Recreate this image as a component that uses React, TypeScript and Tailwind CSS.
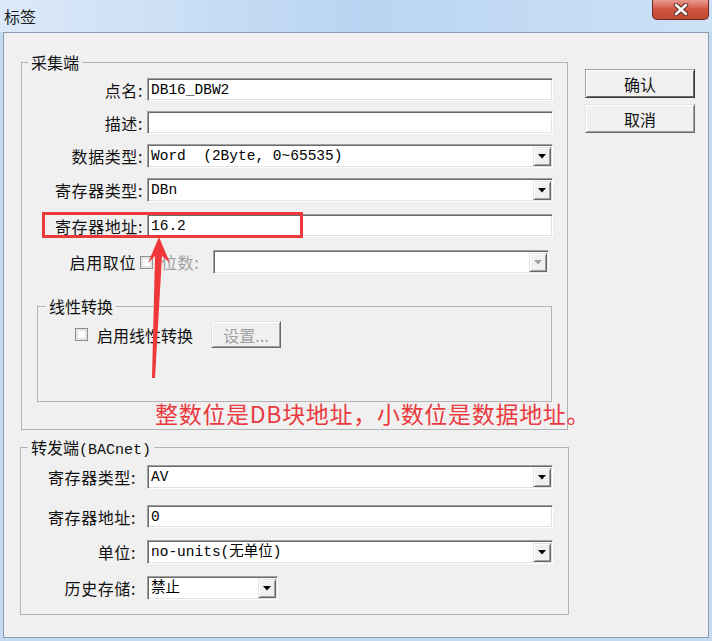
import React from 'react';

const cjk = "font-['Noto_Sans_CJK_SC',sans-serif]";
const mono = "font-['Liberation_Mono','Noto_Sans_CJK_SC',monospace]";

const sunken =
  'bg-white border border-t-[#a0a0a0] border-l-[#a0a0a0] border-b-white border-r-white shadow-[inset_1px_1px_0_#696969,inset_-1px_-1px_0_#e3e3e3]';
const raised =
  'bg-[#f0f0f0] border border-t-[#e3e3e3] border-l-[#e3e3e3] border-b-[#696969] border-r-[#696969] shadow-[inset_1px_1px_0_#ffffff,inset_-1px_-1px_0_#a0a0a0]';

const DropArrow: React.FC<{ disabled?: boolean }> = ({ disabled }) => (
  <div className={`${raised} w-[18px] h-[19px] mr-[1px] flex items-center justify-center shrink-0`}>
    <svg width="8" height="5" viewBox="0 0 8 5">
      <path d="M0 0 H8 L4 4.5 Z" fill={disabled ? '#a0a0a0' : '#000'} />
    </svg>
  </div>
);

const TextBox: React.FC<{ value?: string; width?: string; height?: string }> = ({
  value = '',
  width = 'w-[406px]',
  height = 'h-[23px]',
}) => (
  <div className={`${sunken} ${width} ${height} flex items-center pl-[3px] ${mono} text-[14.5px] leading-[18px] text-black`}>
    {value}
  </div>
);

const Combo: React.FC<{ value?: string; width?: string; disabled?: boolean }> = ({
  value = '',
  width = 'w-[406px]',
  disabled,
}) => (
  <div className={`${sunken} ${width} h-[24px] flex items-center justify-between pl-[3px]`}>
    <span className={`${mono} text-[14.5px] leading-[18px] text-black whitespace-pre`}>{value}</span>
    <DropArrow disabled={disabled} />
  </div>
);

const CheckBox: React.FC = () => (
  <div className="w-[13px] h-[13px] border border-[#8e8f8f] bg-white shadow-[inset_0_0_0_2px_#e4e4e4] shrink-0" />
);

const Row: React.FC<{ label: string; labelW: string; gap: string; mt: string; children: React.ReactNode }> = ({
  label,
  labelW,
  gap,
  mt,
  children,
}) => (
  <div className={`flex items-center ${mt}`}>
    <div className={`${labelW} ${gap} text-right text-[16px] leading-[20px] tracking-[0.6px] text-[#111] whitespace-nowrap`}>
      {label}
    </div>
    {children}
  </div>
);

export default function App() {
  return (
    <div className={`relative w-[712px] h-[641px] bg-[#c4daf1] flex flex-col overflow-hidden ${cjk}`}>
      {/* title bar */}
      <div className="h-[32px] flex justify-between items-start bg-linear-to-r from-[#dce9f8] via-[#b9d4f2] to-[#cde1f6]">
        <span className="self-center pl-[4px] text-[16px] text-[#1a1a1a]">标签</span>
        <div className="mr-[3px] w-[57px] h-[20px] rounded-b-[5px] border border-t-0 border-[#6b2a22] bg-linear-to-b from-[#e99a8f] via-[#d2533f] to-[#c44a33] flex items-center justify-center">
          <svg width="16" height="13" viewBox="0 0 16 13">
            <path d="M3 2 L13 11 M13 2 L3 11" stroke="#5b2a24" strokeWidth="4.5" strokeLinecap="round" />
            <path d="M3 2 L13 11 M13 2 L3 11" stroke="#ffffff" strokeWidth="2.6" strokeLinecap="round" />
          </svg>
        </div>
      </div>

      {/* client area */}
      <div className="flex-1 mx-[3px] mb-[3px] border border-[#8d9db1] bg-[#f0f0f0] flex">
        <div className="ml-[17px] pt-[19px] flex flex-col">
          <fieldset className="w-[547px] h-[378px] border border-[#b4b4b4]">
            <legend className="ml-[6px] px-[3px] h-[20px] leading-[20px] text-[16px] text-[#111]">采集端</legend>
            <div className="pt-[6px] flex flex-col">
              <Row label="点名:" labelW="w-[121px]" gap="mr-[4px]" mt="">
                <TextBox value="DB16_DBW2" />
              </Row>
              <Row label="描述:" labelW="w-[121px]" gap="mr-[4px]" mt="mt-[10px]">
                <TextBox />
              </Row>
              <Row label="数据类型:" labelW="w-[121px]" gap="mr-[4px]" mt="mt-[10px]">
                <Combo value="Word  (2Byte, 0~65535)" />
              </Row>
              <Row label="寄存器类型:" labelW="w-[121px]" gap="mr-[4px]" mt="mt-[10px]">
                <Combo value="DBn" />
              </Row>
              <Row label="寄存器地址:" labelW="w-[121px]" gap="mr-[4px]" mt="mt-[12px]">
                <TextBox value="16.2" />
              </Row>
              <div className="flex items-center mt-[13px]">
                <div className="w-[114px] text-right text-[16px] leading-[20px] tracking-[0.6px] text-[#111]">启用取位</div>
                <div className="ml-[4px]">
                  <CheckBox />
                </div>
                <div className="ml-[8px] w-[52px] text-[16px] leading-[20px] tracking-[0.6px] text-[#a0a0a0]">位数:</div>
                <Combo width="w-[336px]" disabled />
              </div>

              <fieldset className="ml-[15px] mt-[22px] w-[515px] h-[106px] border border-[#b4b4b4]">
                <legend className="ml-[8px] px-[3px] h-[20px] leading-[20px] text-[16px] text-[#111]">线性转换</legend>
                <div className="mt-[5px] h-[27px] flex items-center pl-[37px]">
                  <CheckBox />
                  <span className="ml-[9px] w-[114px] text-[16px] leading-[20px] text-[#111]">启用线性转换</span>
                  <div className={`${raised} w-[70px] h-[27px] flex items-center justify-center text-[16px] leading-[20px] text-[#a0a0a0]`}>
                    设置...
                  </div>
                </div>
              </fieldset>
            </div>
          </fieldset>

          <fieldset className="-ml-[1px] mt-[7px] w-[549px] h-[178px] border border-[#b4b4b4]">
            <legend className="ml-[7px] px-[3px] h-[20px] leading-[20px] text-[16px] text-[#111] whitespace-nowrap">
              转发端<span className={`${mono} text-[15px] leading-[20px]`}>(BACnet)</span>
            </legend>
            <div className="pt-[8px] flex flex-col">
              <Row label="寄存器类型:" labelW="w-[115px]" gap="mr-[11px]" mt="">
                <Combo value="AV" />
              </Row>
              <Row label="寄存器地址:" labelW="w-[115px]" gap="mr-[11px]" mt="mt-[16px]">
                <TextBox value="0" />
              </Row>
              <Row label="单位:" labelW="w-[115px]" gap="mr-[11px]" mt="mt-[12px]">
                <Combo value="no-units(无单位)" />
              </Row>
              <Row label="历史存储:" labelW="w-[115px]" gap="mr-[11px]" mt="mt-[12px]">
                <Combo value="禁止" width="w-[131px]" />
              </Row>
            </div>
          </fieldset>
        </div>

        <div className="ml-[16px] pt-[36px] flex flex-col">
          <div className="w-[110px] h-[29px] bg-[#f0f0f0] border border-t-[#a0a0a0] border-l-[#a0a0a0] border-b-[#3c3c3c] border-r-[#3c3c3c] shadow-[inset_1px_1px_0_#ffffff,inset_-1px_-1px_0_#696969] flex items-center justify-center text-[16px] text-[#111]">
            确认
          </div>
          <div className={`${raised} mt-[6px] w-[110px] h-[29px] flex items-center justify-center text-[16px] text-[#111]`}>
            取消
          </div>
        </div>
      </div>

      {/* annotations */}
      <div className="absolute left-[42px] top-[212px] w-[261px] h-[26px] border-[3px] border-[#ea3a3a]" />
      <svg className="absolute left-[140px] top-[230px]" width="40" height="155" viewBox="0 0 40 155">
        <polygon points="19,7 30,33 22,26 15,148 12,148 15,26 8,33" fill="#f0373a" />
      </svg>
      <div className="absolute left-[155px] top-[398px] leading-[30px] text-[23px] tracking-[0.7px] text-[#ea3a3f] whitespace-nowrap">
        整数位是DB块地址，小数位是数据地址。
      </div>
    </div>
  );
}
